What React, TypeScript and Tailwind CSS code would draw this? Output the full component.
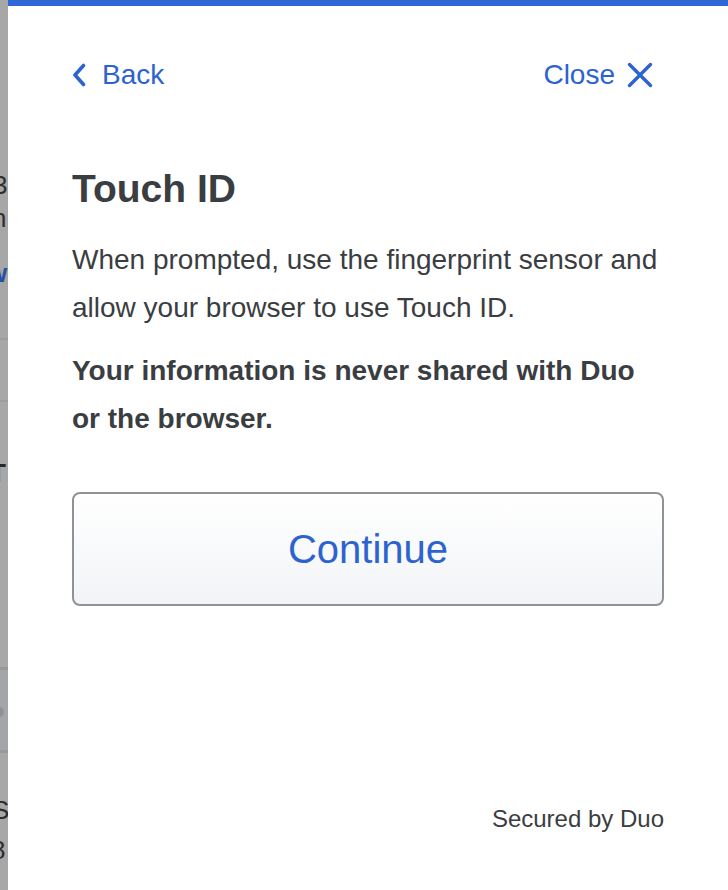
import React from 'react';

const Strip: React.FC = () => (
  <div className="w-2 shrink-0 overflow-hidden bg-[#a7a7a7] font-['Liberation_Sans',sans-serif] text-[26px] leading-none text-[#2f2f2f]">
    <div className="mt-[172px] h-[33px] -ml-[7px]">3</div>
    <div className="h-[55px] -ml-[8px]">n</div>
    <div className="h-[78px] -ml-[13px] font-bold text-[#2a4fa6]">w</div>
    <div className="h-[2px] bg-[#9d9d9d]" />
    <div className="h-[60px]" />
    <div className="h-[2px] bg-[#9d9d9d]" />
    <div className="mt-[58px] h-[30px] -ml-[10px] font-bold text-[#262626]">T</div>
    <div className="mt-[177px] h-[3px] bg-[#999999]" />
    <div className="h-[80px] bg-[#a3a5a8] pt-[37px]">
      <div className="-ml-[6px] h-[10px] w-[10px] rounded-full bg-[#8f9194]" />
    </div>
    <div className="h-[3px] bg-[#999999]" />
    <div className="mt-[44px] h-[40px] -ml-[8px] text-[#2c2c2c]">S</div>
    <div className="h-[30px] -ml-[9px] text-[#2c2c2c]">8</div>
  </div>
);

const App: React.FC = () => {
  return (
    <div className="flex h-[890px] w-[728px] overflow-hidden bg-[#a7a7a7] font-['Liberation_Sans',Arial,sans-serif]">
      <Strip />
      <div className="flex flex-1 flex-col border-t-[6px] border-[#2f66d6] bg-white px-16 text-[#3a3d41]">
        <div className="mt-[53px] flex h-8 items-center justify-between text-[28px] leading-8 text-[#2c63cf]">
          <button className="flex items-center gap-4">
            <svg width="14" height="24" viewBox="0 0 14 24" fill="none">
              <path d="M11.5 2.5 L3 12 L11.5 21.5" stroke="currentColor" strokeWidth="3.6" strokeLinecap="round" strokeLinejoin="round" />
            </svg>
            Back
          </button>
          <button className="mr-[11px] flex items-center gap-3">
            Close
            <svg width="26" height="26" viewBox="0 0 26 26" fill="none">
              <path d="M2.5 2.5 L23.5 23.5 M23.5 2.5 L2.5 23.5" stroke="currentColor" strokeWidth="3.4" strokeLinecap="round" />
            </svg>
          </button>
        </div>

        <h1 className="mt-[75px] text-[39px] font-bold leading-[45px]">Touch ID</h1>

        <p className="mt-[25px] text-[28px] leading-[48px]">
          When prompted, use the fingerprint sensor and allow your browser to use Touch ID.
        </p>
        <p className="mt-[15px] text-[28px] font-bold leading-[48px]">
          Your information is never shared with Duo or the browser.
        </p>

        <button className="mt-[49px] h-[114px] w-full rounded-lg border-2 border-[#8f9296] bg-gradient-to-b from-white to-[#f2f4f7] text-[40px] text-[#2c63cf]">
          Continue
        </button>

        <div className="mt-auto pb-[57px] text-right text-[24px] leading-7 text-[#3a3d41]">Secured by Duo</div>
      </div>
    </div>
  );
};

export default App;
